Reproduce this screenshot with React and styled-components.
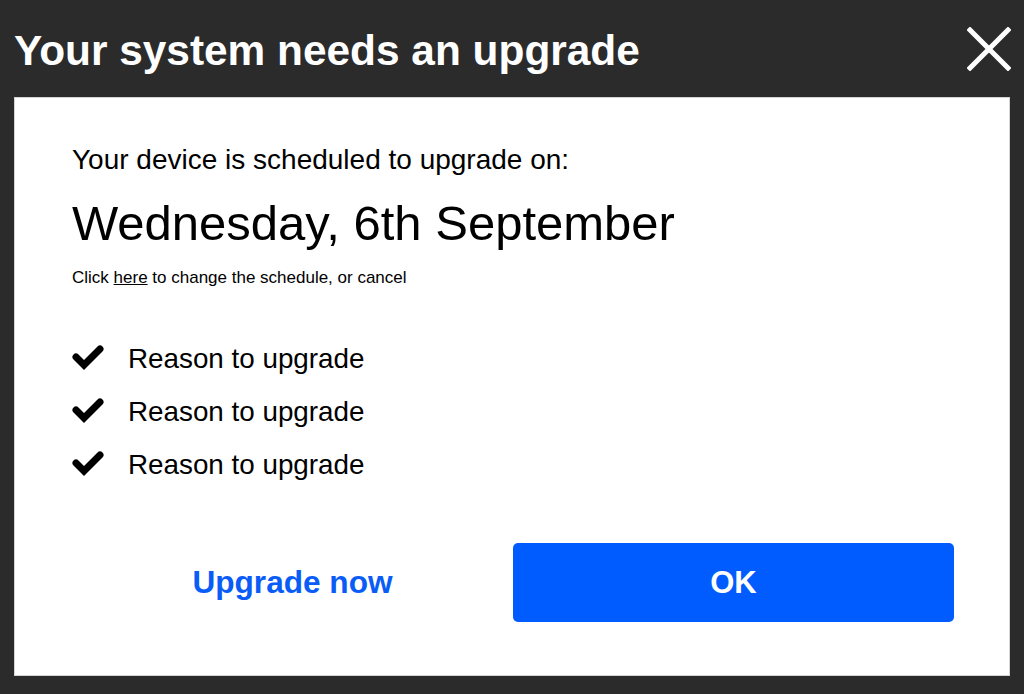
import React from 'react';
import styled, { createGlobalStyle } from 'styled-components';

const GlobalStyle = createGlobalStyle`
  html, body {
    margin: 0;
    padding: 0;
    background: #2b2b2b;
    font-family: 'Liberation Sans', Arial, Helvetica, sans-serif;
  }
  * { box-sizing: border-box; }
`;

const Screen = styled.div`
  width: 1024px;
  height: 694px;
  background: #2b2b2b;
  display: flex;
  flex-direction: column;
`;

const TitleBar = styled.header`
  height: 97px;
  padding: 0 14px;
  display: flex;
  align-items: center;
  justify-content: space-between;
`;

const Title = styled.h1`
  margin: 0;
  padding-top: 5px;
  font-size: 42.4px;
  line-height: 42px;
  font-weight: 700;
  color: #fff;
`;

const CloseButton = styled.button`
  width: 44px;
  height: 44px;
  padding: 0;
  margin-right: -1px;
  border: 0;
  background: none;
  cursor: pointer;
  display: flex;
  svg { display: block; }
`;

const Panel = styled.main`
  margin: 0 14px;
  height: 579px;
  background: #fff;
  border: 1px solid #d4d4d4;
  padding: 46px 55px 53px 57px;
  display: flex;
  flex-direction: column;
`;

const Lead = styled.p`
  margin: 0;
  font-size: 28px;
  line-height: 32px;
  color: #000;
`;

const DateText = styled.p`
  margin: 19px 0 0;
  font-size: 49px;
  line-height: 56px;
  color: #000;
`;

const Note = styled.p`
  margin: 17px 0 0;
  font-size: 17px;
  line-height: 20px;
  color: #000;
  a { color: inherit; text-decoration: underline; }
`;

const Reasons = styled.ul`
  list-style: none;
  margin: 55px 0 0;
  padding: 0;
  display: flex;
  flex-direction: column;
  gap: 21px;
`;

const Reason = styled.li`
  display: flex;
  align-items: center;
  gap: 24px;
  font-size: 27.8px;
  line-height: 32px;
  color: #000;
  svg { display: block; margin-bottom: 4px; }
`;

const Actions = styled.div`
  margin-top: auto;
  display: grid;
  grid-template-columns: 1fr 1fr;
  align-items: center;
`;

const LinkButton = styled.button`
  height: 79px;
  border: 0;
  background: none;
  font-family: inherit;
  font-size: 31.6px;
  font-weight: 700;
  color: #0a5cf7;
  cursor: pointer;
`;

const PrimaryButton = styled.button`
  height: 79px;
  border: 0;
  border-radius: 5px;
  background: #005cff;
  font-family: inherit;
  font-size: 31px;
  font-weight: 700;
  color: #fff;
  cursor: pointer;
`;

const CheckIcon = () => (
  <svg width="32" height="26" viewBox="0 0 32 26">
    <polyline points="4,13 12,21 28,5" fill="none" stroke="#000" strokeWidth="7" strokeLinecap="round" strokeLinejoin="miter" />
  </svg>
);

const CloseIcon = () => (
  <svg width="44" height="44" viewBox="0 0 44 44">
    <path d="M3 3 L41 41 M41 3 L3 41" stroke="#fff" strokeWidth="5" strokeLinecap="square" />
  </svg>
);

const reasons = ['Reason to upgrade', 'Reason to upgrade', 'Reason to upgrade'];

export default function App() {
  return (
    <>
      <GlobalStyle />
      <Screen>
        <TitleBar>
          <Title>Your system needs an upgrade</Title>
          <CloseButton aria-label="Close"><CloseIcon /></CloseButton>
        </TitleBar>
        <Panel>
          <Lead>Your device is scheduled to upgrade on:</Lead>
          <DateText>Wednesday, 6th September</DateText>
          <Note>Click <a href="#">here</a> to change the schedule, or cancel</Note>
          <Reasons>
            {reasons.map((r, i) => (
              <Reason key={i}><CheckIcon />{r}</Reason>
            ))}
          </Reasons>
          <Actions>
            <LinkButton>Upgrade now</LinkButton>
            <PrimaryButton>OK</PrimaryButton>
          </Actions>
        </Panel>
      </Screen>
    </>
  );
}
